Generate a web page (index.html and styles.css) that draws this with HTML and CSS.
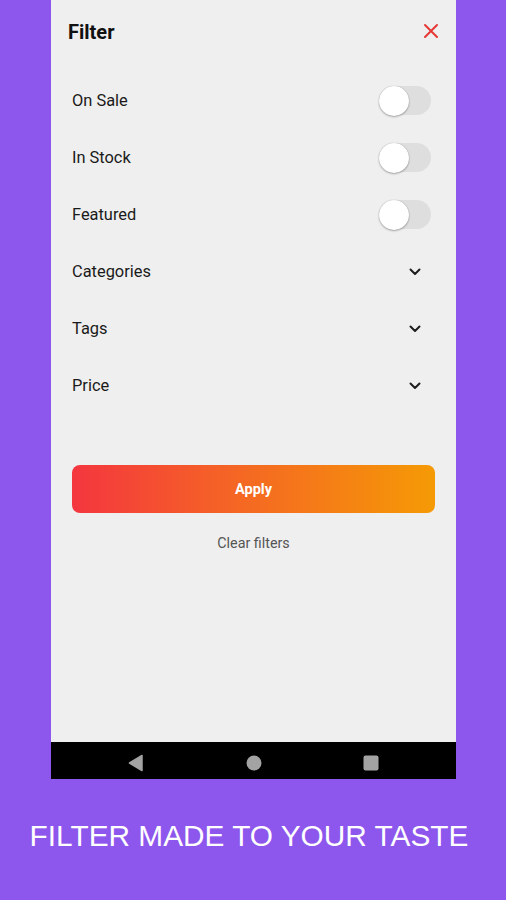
FILE: index.html
```html
<!DOCTYPE html>
<html>
<head>
<meta charset="utf-8">
<link rel="stylesheet" href="styles.css">
</head>
<body>
<div class="stage">
  <div class="phone">
    <div class="screen">
      <div class="header">
        <span class="title">Filter</span>
        <svg class="close" width="16" height="16" viewBox="0 0 16 16"><path d="M2 2L14 14M14 2L2 14" stroke="#e53935" stroke-width="2" stroke-linecap="round"/></svg>
      </div>
      <div class="rows">
        <div class="row"><span>On Sale</span><span class="switch"><span class="thumb"></span></span></div>
        <div class="row"><span>In Stock</span><span class="switch"><span class="thumb"></span></span></div>
        <div class="row"><span>Featured</span><span class="switch"><span class="thumb"></span></span></div>
        <div class="row"><span>Categories</span><svg class="chev" width="12" height="8" viewBox="0 0 12 8"><path d="M1.5 1.5L6 6L10.5 1.5" fill="none" stroke="#1e1e1e" stroke-width="2" stroke-linecap="round" stroke-linejoin="round"/></svg></div>
        <div class="row"><span>Tags</span><svg class="chev" width="12" height="8" viewBox="0 0 12 8"><path d="M1.5 1.5L6 6L10.5 1.5" fill="none" stroke="#1e1e1e" stroke-width="2" stroke-linecap="round" stroke-linejoin="round"/></svg></div>
        <div class="row"><span>Price</span><svg class="chev" width="12" height="8" viewBox="0 0 12 8"><path d="M1.5 1.5L6 6L10.5 1.5" fill="none" stroke="#1e1e1e" stroke-width="2" stroke-linecap="round" stroke-linejoin="round"/></svg></div>
      </div>
      <button class="apply">Apply</button>
      <div class="clear">Clear filters</div>
    </div>
    <div class="navbar">
      <svg width="16" height="18" viewBox="0 0 16 18"><path d="M14 1.5L1.5 9L14 16.5Z" fill="#a3a3a3" stroke="#a3a3a3" stroke-width="1.5" stroke-linejoin="round"/></svg>
      <svg width="16" height="16" viewBox="0 0 16 16"><circle cx="8" cy="8" r="7.5" fill="#a3a3a3"/></svg>
      <svg width="16" height="16" viewBox="0 0 16 16"><rect x="0.5" y="0.5" width="15" height="15" rx="2" fill="#a3a3a3"/></svg>
    </div>
  </div>
  <div class="caption">FILTER MADE TO YOUR TASTE</div>
</div>
</body>
</html>
```
FILE: styles.css
```css
html, body {
  margin: 0;
  padding: 0;
  background: #8d56ec;
}
.stage {
  width: 506px;
  height: 900px;
  display: flex;
  flex-direction: column;
}
.phone {
  margin-left: 51px;
  width: 405px;
  display: flex;
  flex-direction: column;
}
.screen {
  height: 742px;
  background: #efefef;
  display: flex;
  flex-direction: column;
  font-family: Roboto, "Noto Sans", sans-serif;
  color: #1e1e1e;
}
.header {
  height: 64px;
  display: flex;
  align-items: center;
  justify-content: space-between;
  padding: 0 17px 0 17px;
}
.title {
  font-size: 20px;
  font-weight: 700;
  color: #111;
}
.close {
  margin-top: -2px;
}
.rows {
  margin-top: 8px;
  display: flex;
  flex-direction: column;
}
.row {
  height: 57px;
  display: flex;
  align-items: center;
  justify-content: space-between;
  padding: 0 25px 0 21px;
  font-size: 16.4px;
  font-weight: 400;
  color: #1a1a1a;
}
.chev {
  margin-right: 10px;
}
.switch {
  position: relative;
  width: 52px;
  height: 29px;
  border-radius: 15px;
  background: #dedede;
}
.thumb {
  position: absolute;
  left: 0;
  top: -0.5px;
  width: 30px;
  height: 30px;
  border-radius: 50%;
  background: #fff;
  box-shadow: 0 1px 2px rgba(0,0,0,0.3), 0 0 1px rgba(0,0,0,0.25);
}
.apply {
  margin: 51px 21px 0 21px;
  height: 48px;
  border: none;
  border-radius: 8px;
  background: linear-gradient(90deg, #f4363f 0%, #f56624 45%, #f59a05 100%);
  color: #fff;
  font-family: Roboto, "Noto Sans", sans-serif;
  font-weight: 700;
  font-size: 14.5px;
}
.clear {
  margin-top: 20px;
  line-height: 20px;
  text-align: center;
  font-size: 14.3px;
  color: #555;
}
.navbar {
  height: 37px;
  background: #000;
  display: flex;
  align-items: center;
  justify-content: space-between;
  padding: 5px 77px 0 77px;
  box-sizing: border-box;
}
.caption {
  margin-top: 40px;
  padding-right: 8px;
  text-align: center;
  font-family: "Liberation Sans", Arial, sans-serif;
  font-size: 29.8px;
  color: #fff;
  line-height: 34px;
}
```
